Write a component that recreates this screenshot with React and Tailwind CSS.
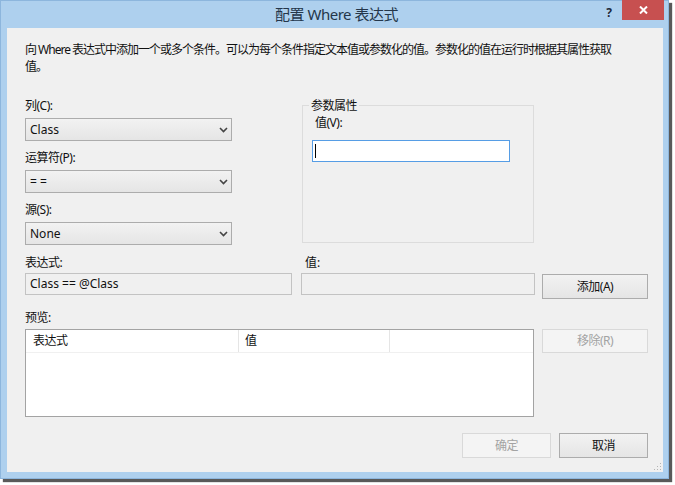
import React from "react";

const FONT = { fontFamily: '"Noto Sans", "Noto Sans CJK SC", sans-serif' };

// --- petit chevron des listes déroulantes ---
const Chevron = () => (
  <svg width="9" height="6" viewBox="0 0 9 6" className="shrink-0">
    <polyline points="1,1 4.5,4.5 8,1" fill="none" stroke="#444" strokeWidth="1.6" />
  </svg>
);

const Combo = ({ value }) => (
  <div className="h-[23px] w-full border border-[#acacac] bg-gradient-to-b from-[#f2f2f2] to-[#e5e5e5] flex items-center justify-between pl-[4px] pr-[3px] text-[12px] leading-none text-[#111]">
    <span>{value}</span>
    <Chevron />
  </div>
);

const Field = ({ label, value }) => (
  <div className="flex flex-col">
    <div className="h-[17px] leading-[17px] text-[12px] tracking-[-0.5px] text-[#111]">{label}</div>
    <div className="mt-[4px]">
      <Combo value={value} />
    </div>
  </div>
);

const Btn = ({ children, disabled = false, className = "" }) => (
  <div
    className={`flex items-center justify-center text-[12px] tracking-[-0.5px] leading-none border ${
      disabled
        ? "border-[#d9d9d9] bg-[#f4f4f4] text-[#a3a3a3]"
        : "border-[#acacac] bg-gradient-to-b from-[#f2f2f2] to-[#e5e5e5] text-[#111]"
    } ${className}`}
  >
    {children}
  </div>
);

export default function App() {
  return (
    <div className="w-[675px] h-[485px] bg-white overflow-hidden" style={FONT}>
      {/* FENÊTRE */}
      <div className="w-[669px] h-[479px] bg-[#aed0ee] border border-[#8db6dd] shadow-[3px_3px_1px_rgba(0,0,0,0.65)] flex flex-col">
        {/* Barre de titre */}
        <div className="relative h-[27px] shrink-0 flex items-center justify-center">
          <span className="text-[15px] tracking-[-0.5px] leading-none text-[#24364a] ml-[4px]">配置 Where 表达式</span>
          <div className="absolute top-[-1px] right-[4px] flex items-start">
            <span className="mr-[10px] mt-[4px] text-[12px] font-bold text-[#1e2a3a]">?</span>
            <div className="w-[42px] h-[20px] bg-[#c75050] flex items-center justify-center">
              <svg width="9" height="8" viewBox="0 0 9 8">
                <path d="M1 0.5 L8 7.5 M8 0.5 L1 7.5" stroke="#fff" strokeWidth="2" />
              </svg>
            </div>
          </div>
        </div>

        {/* Corps */}
        <div className="relative flex-1 mb-[6px] ml-[6px] mr-[5px] bg-[#f0f0f0] pl-[18px] pt-[13px] text-[#111]">
          <p className="text-[12px] leading-[17px] tracking-[-1px] whitespace-nowrap">
            向 Where 表达式中添加一个或多个条件。可以为每个条件指定文本值或参数化的值。参数化的值在运行时根据其属性获取
            <br />
            值。
          </p>

          {/* Haut : listes + groupe */}
          <div className="mt-[22px] h-[147px] flex">
            <div className="w-[207px] flex flex-col gap-[8px]">
              <Field label="列(C):" value="Class" />
              <Field label="运算符(P):" value="= =" />
              <Field label="源(S):" value="None" />
            </div>

            <fieldset className="ml-[70px] w-[232px] h-[146px] border border-[#dcdcdc] m-0 p-0">
              <legend className="ml-[6px] px-[2px] h-[17px] leading-[17px] text-[12px] tracking-[-0.5px]">参数属性</legend>
              <div className="pl-[12px] h-[17px] leading-[17px] text-[12px] tracking-[-0.5px]">值(V):</div>
              <div className="ml-[9px] mt-[9px] w-[198px] h-[22px] bg-white border border-[#569de5] flex items-center pl-[2px]">
                <div className="w-px h-[14px] bg-black" />
              </div>
            </fieldset>
          </div>

          {/* Expression / valeur / ajouter */}
          <div className="mt-[10px] flex">
            <div className="w-[267px]">
              <div className="h-[17px] leading-[17px] text-[12px] tracking-[-0.5px]">表达式:</div>
              <div className="mt-[2px] h-[22px] border border-[#c3c3c3] bg-[#f0f0f0] flex items-center pl-[4px] text-[12px] leading-none">
                Class == @Class
              </div>
            </div>
            <div className="ml-[9px] w-[234px]">
              <div className="h-[17px] leading-[17px] text-[12px] pl-[4px]">值:</div>
              <div className="mt-[2px] h-[22px] border border-[#c3c3c3] bg-[#f0f0f0]" />
            </div>
            <Btn className="ml-[7px] mt-[20px] w-[106px] h-[25px]">添加(A)</Btn>
          </div>

          {/* Aperçu */}
          <div className="mt-[10px] h-[17px] leading-[17px] text-[12px] tracking-[-0.5px]">预览:</div>
          <div className="mt-[3px] flex items-start">
            <div className="w-[509px] h-[88px] bg-white border border-[#a3a3a3]">
              <div className="h-[23px] flex text-[12px] tracking-[-0.5px] leading-[22px] border-b border-[#f0f0f0]">
                <div className="w-[213px] pl-[7px] border-r border-[#e5e5e5]">表达式</div>
                <div className="w-[151px] pl-[6px] border-r border-[#e5e5e5]">值</div>
                <div className="flex-1" />
              </div>
            </div>
            <Btn disabled className="ml-[8px] w-[106px] h-[24px]">移除(R)</Btn>
          </div>

          {/* Boutons bas */}
          <div className="mt-[16px] w-[623px] flex justify-end gap-[8px]">
            <Btn disabled className="w-[89px] h-[25px]">确定</Btn>
            <Btn className="w-[89px] h-[25px]">取消</Btn>
          </div>

          {/* poignée de redimensionnement */}
          <svg width="8" height="8" viewBox="0 0 8 8" className="absolute right-[1px] bottom-[1px]">
            <rect x="6" y="0" width="1" height="1" fill="#b5b5b5" />
            <rect x="3" y="3" width="1" height="1" fill="#b5b5b5" />
            <rect x="6" y="3" width="1" height="1" fill="#b5b5b5" />
            <rect x="0" y="6" width="1" height="1" fill="#b5b5b5" />
            <rect x="3" y="6" width="1" height="1" fill="#b5b5b5" />
            <rect x="6" y="6" width="1" height="1" fill="#b5b5b5" />
          </svg>
        </div>
      </div>
    </div>
  );
}
